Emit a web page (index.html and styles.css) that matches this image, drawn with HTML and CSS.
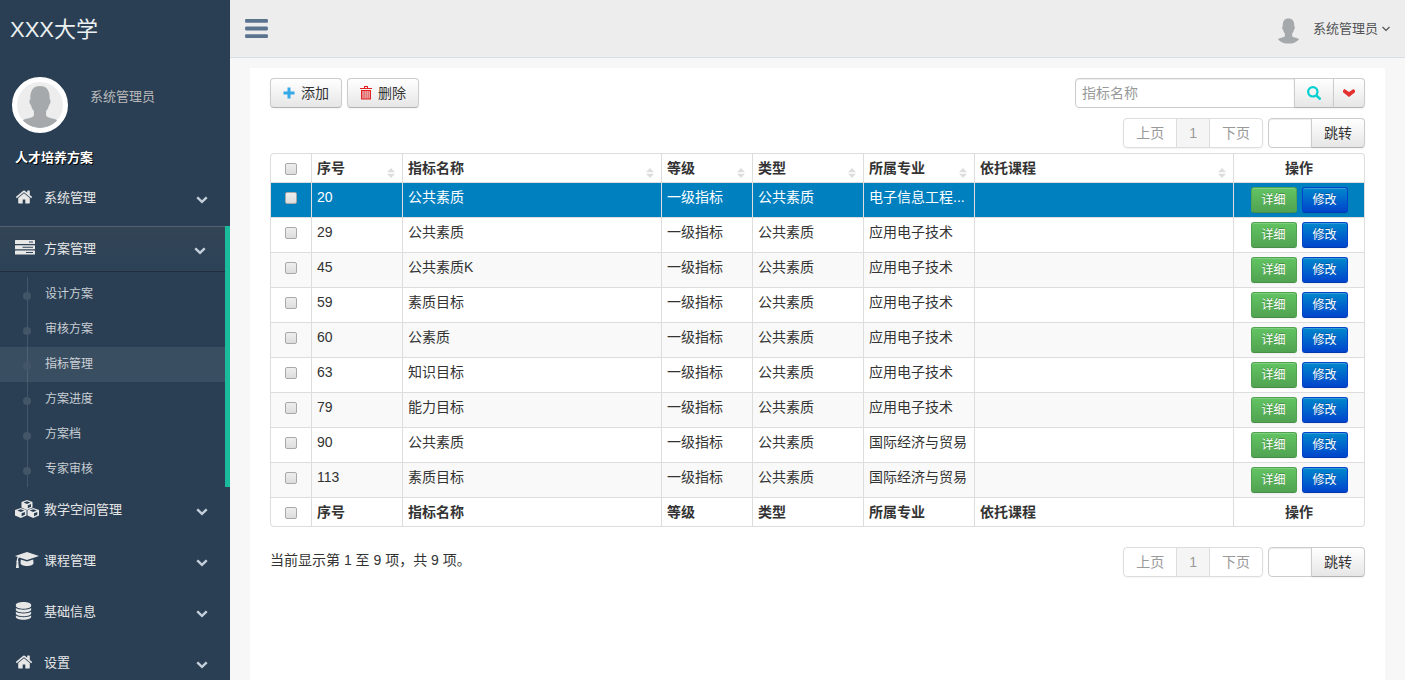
FILE: index.html
```
<!DOCTYPE html>
<html lang="zh-CN">
<head>
    <meta charset="UTF-8">
    <meta name="viewport" content="width=device-width, initial-scale=1.0">
    <title>指标管理</title>
    <link rel="stylesheet" href="styles.css">
</head>
<body>
    <!-- 图标 -->
    <svg class="sprite" aria-hidden="true">
        <symbol id="i-home" viewBox="0 0 1792 1792"><path d="M1472 992v480q0 26-19 45t-45 19h-384v-384h-256v384h-384q-26 0-45-19t-19-45v-480q0-1 .5-3t.5-3l575-474 575 474q1 2 1 6zm223-69l-62 74q-8 9-21 11h-3q-13 0-21-7l-692-577-692 577q-12 8-24 7-13-2-21-11l-62-74q-8-10-7-23.5t11-21.5l719-599q32-26 76-26t76 26l244 204v-195q0-14 9-23t23-9h192q14 0 23 9t9 23v408l219 182q10 8 11 21.5t-7 23.5z"/></symbol>
        <symbol id="i-bars" viewBox="128 256 1536 1280"><path d="M1664 1344v128q0 26-19 45t-45 19h-1408q-26 0-45-19t-19-45v-128q0-26 19-45t45-19h1408q26 0 45 19t19 45zm0-512v128q0 26-19 45t-45 19h-1408q-26 0-45-19t-19-45v-128q0-26 19-45t45-19h1408q26 0 45 19t19 45zm0-512v128q0 26-19 45t-45 19h-1408q-26 0-45-19t-19-45v-128q0-26 19-45t45-19h1408q26 0 45 19t19 45z"/></symbol>
        <symbol id="i-chevron" viewBox="0 0 1792 1792"><path d="M1683 808l-742 741q-19 19-45 19t-45-19l-742-741q-19-19-19-45.500t19-45.500l166-165q19-19 45-19t45 19l531 531 531-531q19-19 45-19t45 19l166 165q19 19 19 45.500t-19 45.500z"/></symbol>
        <symbol id="i-angle" viewBox="0 0 10 8"><path d="M1.500 2L5 5.500 8.500 2" fill="none" stroke="currentColor" stroke-width="1.200"/></symbol>
        <symbol id="i-tasks" viewBox="0 0 20 18"><path fill-rule="evenodd" d="M.5 1h19a.5.500 0 0 1 .5.500v3a.5.500 0 0 1-.5.500H.5a.5.500 0 0 1-.5-.5v-3A.5.500 0 0 1 .5 1zM14 2.500v1h4v-1zM.5 6.200h19a.5.500 0 0 1 .5.500v3a.5.500 0 0 1-.5.500H.5a.5.500 0 0 1-.5-.5v-3a.5.500 0 0 1 .5-.5zM7.500 7.700v1H18v-1zM.5 11.400h19a.5.500 0 0 1 .5.500v3a.5.500 0 0 1-.5.500H.5a.5.500 0 0 1-.5-.5v-3a.5.500 0 0 1 .5-.5zM11 12.900v1h7v-1z"/></symbol>
        <symbol id="i-cubes" viewBox="0 0 24 18">
            <path fill-rule="evenodd" d="M12 0l5.500 2v5.500L12 10 6.500 7.500V2zM12 1.200L8.500 2.500 12 3.900l3.500-1.400zM12.800 5.200v3l3.200-1.500V3.900z"/>
            <path fill-rule="evenodd" d="M5.800 8l5.700 2v5.500L5.800 18 0 15.500V10zM5.800 9.200L2.300 10.500l3.500 1.400 3.500-1.400zM6.600 13.200v3l3.300-1.500v-2.800z"/>
            <path fill-rule="evenodd" d="M18.200 8l5.800 2v5.500L18.200 18l-5.700-2.500V10zM18.200 9.200l-3.500 1.300 3.500 1.400 3.500-1.400zM19 13.200v3l3.300-1.500v-2.800z"/>
        </symbol>
        <symbol id="i-cap" viewBox="0 0 24 18"><path d="M12 1L24 5 12 9 4.200 6.400C3.400 7 3.100 8 3 9.400c.6.400.8 1.200.3 1.800L3.900 17H.9l.7-5.800c-.6-.6-.4-1.400.2-1.800.1-1.400.3-2.600 1-3.500L0 5zM5.800 8.400L12 10.500l6.200-2.100.3 3.800C18.500 13.800 15.500 15 12 15s-6.500-1.200-6.500-2.800z"/></symbol>
        <symbol id="i-database" viewBox="0 0 17 20"><path d="M8.500 0C13.200 0 17 1.300 17 3v1.500c0 1.700-3.800 3-8.500 3S0 6.200 0 4.500V3c0-1.700 3.800-3 8.500-3zM0 6.800c1.700 1.200 4.800 1.900 8.500 1.900s6.800-.7 8.500-1.900v1.800c0 1.700-3.800 3-8.500 3s-8.500-1.300-8.500-3zM0 10.900c1.700 1.200 4.800 1.900 8.500 1.900s6.800-.7 8.500-1.900v1.800c0 1.700-3.800 3-8.500 3s-8.500-1.300-8.500-3zM0 15c1.700 1.200 4.800 1.900 8.500 1.900S15.300 16.200 17 15v1.600c0 1.700-3.800 3-8.500 3s-8.500-1.300-8.500-3z"/></symbol>
        <symbol id="i-user" viewBox="0 0 40 48"><path d="M20 0c7.500 0 11.500 5 11 15 1.500 0 1.500 5-.8 7-.4 3-1.700 5-3.200 6.500V34c3 3.500 11 2.500 13 6-5 5.300-12 8-20 8S5 45.300 0 40c2-3.500 10-2.500 13-6v-5.500c-1.500-1.500-2.800-3.500-3.200-6.500C7.500 20 7.500 15 9 15 8.500 5 12.500 0 20 0z"/></symbol>
        <symbol id="i-plus" viewBox="0 0 12 12"><path d="M4.500.5h3v4h4v3h-4v4h-3v-4h-4v-3h4z"/></symbol>
        <symbol id="i-trash" viewBox="0 0 12 14"><path fill-rule="evenodd" d="M4 0h4v2h4v1H0V2h4zM5 1v1h2V1zM1 4h10v9.500H1zM2.500 5v7.500h1V5zM4.600 5v7.500h1V5zM6.600 5v7.500h1V5zM8.600 5v7.500h1V5z"/></symbol>
        <symbol id="i-search" viewBox="0 0 12 12"><path d="M8.200 8.200l2.700 2.700" stroke="currentColor" stroke-width="2.200" stroke-linecap="round"/><circle cx="5" cy="5" r="4" fill="none" stroke="currentColor" stroke-width="1.900"/></symbol>
        <symbol id="i-down" viewBox="0 0 12 8"><path d="M1.500 0L0 1.500v1.700L6 8l6-4.800V1.500L10.500 0 6 3z"/></symbol>
        <symbol id="i-sort" viewBox="0 0 8 10"><path d="M4 0l4 4.200H0zM0 5.800h8L4 10z"/></symbol>
    </svg>

    <div class="container">
        <!-- 左侧菜单 -->
        <aside class="sidebar">
            <a class="site-title" href="#">XXX大学</a>
            <div class="profile">
                <div class="avatar"><svg><use href="#i-user"/></svg></div>
                <span class="profile-name">系统管理员</span>
            </div>
            <h3 class="menu-heading">人才培养方案</h3>
            <ul class="menu">
                <li><a href="#"><svg class="menu-icon home"><use href="#i-home"/></svg>系统管理<svg class="arrow"><use href="#i-chevron"/></svg></a></li>
                <li class="active">
                    <a href="#"><svg class="menu-icon tasks"><use href="#i-tasks"/></svg>方案管理<svg class="arrow"><use href="#i-chevron"/></svg></a>
                    <ul class="submenu">
                        <li><a href="#">设计方案</a></li>
                        <li><a href="#">审核方案</a></li>
                        <li class="current"><a href="#">指标管理</a></li>
                        <li><a href="#">方案进度</a></li>
                        <li><a href="#">方案档</a></li>
                        <li><a href="#">专家审核</a></li>
                    </ul>
                </li>
                <li><a href="#"><svg class="menu-icon wide"><use href="#i-cubes"/></svg>教学空间管理<svg class="arrow"><use href="#i-chevron"/></svg></a></li>
                <li><a href="#"><svg class="menu-icon wide"><use href="#i-cap"/></svg>课程管理<svg class="arrow"><use href="#i-chevron"/></svg></a></li>
                <li><a href="#"><svg class="menu-icon database"><use href="#i-database"/></svg>基础信息<svg class="arrow"><use href="#i-chevron"/></svg></a></li>
                <li><a href="#"><svg class="menu-icon home"><use href="#i-home"/></svg>设置<svg class="arrow"><use href="#i-chevron"/></svg></a></li>
            </ul>
        </aside>

        <div class="main">
            <!-- 顶部导航 -->
            <header class="topbar">
                <button type="button" class="toggle" aria-label="菜单"><svg><use href="#i-bars"/></svg></button>
                <a class="user" href="#"><svg class="user-photo"><use href="#i-user"/></svg>系统管理员<svg class="user-arrow"><use href="#i-angle"/></svg></a>
            </header>

            <main class="panel">
                <div class="toolbar">
                    <div class="actions">
                        <button type="button" class="btn"><svg class="icon-add"><use href="#i-plus"/></svg>添加</button>
                        <button type="button" class="btn"><svg class="icon-delete"><use href="#i-trash"/></svg>删除</button>
                    </div>
                    <form class="group">
                        <input type="text" class="search" placeholder="指标名称" aria-label="指标名称">
                        <button type="button" class="btn" aria-label="搜索"><svg class="icon-search"><use href="#i-search"/></svg></button>
                        <button type="button" class="btn btn-more" aria-label="更多"><svg class="icon-down"><use href="#i-down"/></svg></button>
                    </form>
                </div>

                <div class="pager">
                    <div class="group pages">
                        <button type="button">上页</button>
                        <button type="button" class="on">1</button>
                        <button type="button">下页</button>
                    </div>
                    <form class="group">
                        <input type="text" class="page-no" aria-label="页码">
                        <button type="button" class="btn">跳转</button>
                    </form>
                </div>

                <table class="table">
                    <colgroup>
                        <col class="col-check"><col class="col-small"><col><col class="col-small">
                        <col class="col-medium"><col class="col-medium"><col><col class="col-action">
                    </colgroup>
                    <thead>
                        <tr>
                            <th class="check"><input type="checkbox" aria-label="全选"></th>
                            <th><div class="sort">序号<svg><use href="#i-sort"/></svg></div></th>
                            <th><div class="sort">指标名称<svg><use href="#i-sort"/></svg></div></th>
                            <th><div class="sort">等级<svg><use href="#i-sort"/></svg></div></th>
                            <th><div class="sort">类型<svg><use href="#i-sort"/></svg></div></th>
                            <th><div class="sort">所属专业<svg><use href="#i-sort"/></svg></div></th>
                            <th><div class="sort">依托课程<svg><use href="#i-sort"/></svg></div></th>
                            <th class="ops">操作</th>
                        </tr>
                    </thead>
                    <tbody>
                        <tr class="selected">
                            <td class="check"><input type="checkbox" aria-label="选择 20"></td>
                            <td>20</td><td>公共素质</td><td>一级指标</td><td>公共素质</td><td>电子信息工程...</td><td></td>
                            <td class="ops"><div><button type="button" class="btn-detail">详细</button><button type="button" class="btn-edit">修改</button></div></td>
                        </tr>
                        <tr>
                            <td class="check"><input type="checkbox" aria-label="选择 29"></td>
                            <td>29</td><td>公共素质</td><td>一级指标</td><td>公共素质</td><td>应用电子技术</td><td></td>
                            <td class="ops"><div><button type="button" class="btn-detail">详细</button><button type="button" class="btn-edit">修改</button></div></td>
                        </tr>
                        <tr>
                            <td class="check"><input type="checkbox" aria-label="选择 45"></td>
                            <td>45</td><td>公共素质K</td><td>一级指标</td><td>公共素质</td><td>应用电子技术</td><td></td>
                            <td class="ops"><div><button type="button" class="btn-detail">详细</button><button type="button" class="btn-edit">修改</button></div></td>
                        </tr>
                        <tr>
                            <td class="check"><input type="checkbox" aria-label="选择 59"></td>
                            <td>59</td><td>素质目标</td><td>一级指标</td><td>公共素质</td><td>应用电子技术</td><td></td>
                            <td class="ops"><div><button type="button" class="btn-detail">详细</button><button type="button" class="btn-edit">修改</button></div></td>
                        </tr>
                        <tr>
                            <td class="check"><input type="checkbox" aria-label="选择 60"></td>
                            <td>60</td><td>公素质</td><td>一级指标</td><td>公共素质</td><td>应用电子技术</td><td></td>
                            <td class="ops"><div><button type="button" class="btn-detail">详细</button><button type="button" class="btn-edit">修改</button></div></td>
                        </tr>
                        <tr>
                            <td class="check"><input type="checkbox" aria-label="选择 63"></td>
                            <td>63</td><td>知识目标</td><td>一级指标</td><td>公共素质</td><td>应用电子技术</td><td></td>
                            <td class="ops"><div><button type="button" class="btn-detail">详细</button><button type="button" class="btn-edit">修改</button></div></td>
                        </tr>
                        <tr>
                            <td class="check"><input type="checkbox" aria-label="选择 79"></td>
                            <td>79</td><td>能力目标</td><td>一级指标</td><td>公共素质</td><td>应用电子技术</td><td></td>
                            <td class="ops"><div><button type="button" class="btn-detail">详细</button><button type="button" class="btn-edit">修改</button></div></td>
                        </tr>
                        <tr>
                            <td class="check"><input type="checkbox" aria-label="选择 90"></td>
                            <td>90</td><td>公共素质</td><td>一级指标</td><td>公共素质</td><td>国际经济与贸易</td><td></td>
                            <td class="ops"><div><button type="button" class="btn-detail">详细</button><button type="button" class="btn-edit">修改</button></div></td>
                        </tr>
                        <tr>
                            <td class="check"><input type="checkbox" aria-label="选择 113"></td>
                            <td>113</td><td>素质目标</td><td>一级指标</td><td>公共素质</td><td>国际经济与贸易</td><td></td>
                            <td class="ops"><div><button type="button" class="btn-detail">详细</button><button type="button" class="btn-edit">修改</button></div></td>
                        </tr>
                    </tbody>
                    <tfoot>
                        <tr>
                            <th class="check"><input type="checkbox" aria-label="全选"></th>
                            <th>序号</th><th>指标名称</th><th>等级</th><th>类型</th><th>所属专业</th><th>依托课程</th>
                            <th class="ops">操作</th>
                        </tr>
                    </tfoot>
                </table>

                <div class="bottom">
                    <p class="info">当前显示第 1 至 9 项，共 9 项。</p>
                    <div class="pager">
                        <div class="group pages">
                            <button type="button">上页</button>
                            <button type="button" class="on">1</button>
                            <button type="button">下页</button>
                        </div>
                        <form class="group">
                            <input type="text" class="page-no" aria-label="页码">
                            <button type="button" class="btn">跳转</button>
                        </form>
                    </div>
                </div>
            </main>
        </div>
    </div>
</body>
</html>
```
FILE: styles.css
```
* {
    box-sizing: border-box;
}
body {
    margin: 0;
    font-family: "Liberation Sans", "Noto Sans CJK SC", sans-serif;
    font-size: 14px;
    line-height: 20px;
    color: #333;
    background: #f7f7f7;
}
a {
    color: inherit;
    text-decoration: none;
}
ul {
    list-style: none;
    margin: 0;
    padding: 0;
}
button, input {
    font-family: inherit;
    font-size: 14px;
    line-height: 20px;
    margin: 0;
}
button {
    cursor: pointer;
}
svg {
    fill: currentColor;
    flex: none;
}
.sprite {
    display: none;
}
.container {
    display: flex;
    height: 100vh;
    overflow: hidden;
}

/* 左侧菜单 */
.sidebar {
    width: 230px;
    flex: none;
    overflow: hidden;
    background: #2a3f54;
    color: #e7e7e7;
    font-size: 13px;
}
.site-title {
    display: block;
    padding: 0 10px;
    font-size: 22px;
    line-height: 60px;
    color: #ecf0f1;
}
.profile {
    display: flex;
    padding: 17px 12px 15px;
    gap: 22px;
}
.avatar {
    display: flex;
    align-items: flex-end;
    justify-content: center;
    width: 56px;
    height: 56px;
    border: 5px solid #fff;
    border-radius: 50%;
    background: #ededed;
    color: #a5a9ab;
    overflow: hidden;
}
.avatar svg {
    width: 36px;
    height: 42px;
}
.profile-name {
    padding-top: 10px;
    color: #bababa;
}
.menu-heading {
    margin: 0;
    padding: 0 15px 7px;
    font-size: 13px;
    line-height: 20px;
    font-weight: bold;
    color: #fff;
    text-shadow: 1px 1px #000;
}
.menu > li > a {
    display: flex;
    padding: 13px 22px 12px 15px;
    margin-bottom: 6px;
}
.menu > .active {
    border-right: 5px solid #1abb9c;
}
.menu > .active > a {
    padding-right: 19px;
    background: linear-gradient(#334556, #2c4257);
    box-shadow: rgba(0, 0, 0, 0.25) 0 1px 0, inset rgba(255, 255, 255, 0.16) 0 1px 0;
}
.menu-icon {
    height: 18px;
}
.menu-icon.home {
    width: 18px;
    margin-right: 11px;
}
.menu-icon.tasks {
    width: 20px;
    margin-right: 9px;
}
.menu-icon.wide {
    width: 24px;
    margin-right: 5px;
}
.menu-icon.database {
    width: 17px;
    margin-right: 12px;
}
.arrow {
    width: 12px;
    height: 12px;
    margin: 5px 0 0 auto;
    color: #c4cfda;
}
.submenu {
    background: linear-gradient(#425668, #425668) 27px 0 / 1px 100% no-repeat;
}
.submenu a {
    display: flex;
    align-items: center;
    height: 35px;
    padding: 0 0 2px 23px;
    font-size: 12px;
    color: rgba(255, 255, 255, 0.75);
}
.submenu a::before {
    content: "";
    width: 8px;
    height: 8px;
    margin: 5px 14px 0 0;
    border-radius: 50%;
    background: #425668;
}
.submenu .current {
    background: rgba(255, 255, 255, 0.08);
}

/* 顶部导航 */
.main {
    flex: 1;
    min-width: 0;
    display: flex;
    flex-direction: column;
    overflow-y: auto;
}
.topbar {
    display: flex;
    justify-content: space-between;
    align-items: center;
    flex: none;
    height: 58px;
    padding: 0 14px 0 15px;
    background: #ededed;
    border-bottom: 1px solid #d9dee4;
}
.toggle {
    display: flex;
    padding: 0;
    border: 0;
    background: none;
    color: #5a738e;
}
.toggle svg {
    width: 23px;
    height: 19px;
}
.user {
    display: flex;
    align-items: center;
    font-size: 13px;
    color: #515356;
}
.user-photo {
    width: 21px;
    height: 26px;
    margin: 4px 14px 0 0;
    color: #a5a9ab;
}
.user-arrow {
    width: 10px;
    height: 8px;
    margin-left: 3px;
}

/* 内容 */
.panel {
    flex: 1 0 auto;
    margin: 10px 20px 0;
    padding: 10px 20px;
    background: #fff;
}
.toolbar {
    display: flex;
    justify-content: space-between;
    margin-bottom: 10px;
}
.actions {
    display: flex;
    gap: 5px;
}
.btn {
    display: flex;
    align-items: center;
    height: 30px;
    padding: 4px 12px;
    border: 1px solid #ccc;
    border-bottom-color: #b3b3b3;
    border-radius: 4px;
    background: linear-gradient(#fff, #e6e6e6);
    box-shadow: 0 1px 2px rgba(0, 0, 0, 0.05);
    color: #333;
}
.icon-add {
    width: 12px;
    height: 12px;
    margin-right: 6px;
    color: #36a9e9;
}
.icon-delete {
    width: 12px;
    height: 14px;
    margin-right: 6px;
    color: #e02222;
}
.icon-search {
    width: 14px;
    height: 14px;
    color: #00d0d0;
}
.icon-down {
    width: 12px;
    height: 8px;
    color: #e53030;
}
.btn-more {
    padding: 4px 9px;
}
.group {
    display: flex;
}
.group > * {
    border-radius: 0;
}
.group > * + * {
    margin-left: -1px;
}
.group > :first-child {
    border-radius: 4px 0 0 4px;
}
.group > :last-child {
    border-radius: 0 4px 4px 0;
}
.group input {
    height: 30px;
    padding: 4px 6px;
    border: 1px solid #ccc;
    box-shadow: inset 0 1px 1px rgba(0, 0, 0, 0.075);
}
.group input::placeholder {
    color: #999;
}
.group .search {
    width: 220px;
}
.group .page-no {
    width: 44px;
}
.pager {
    display: flex;
    justify-content: flex-end;
    gap: 5px;
}
.pages {
    border-radius: 4px;
    box-shadow: 0 1px 2px rgba(0, 0, 0, 0.05);
}
.pages button {
    height: 30px;
    padding: 4px 12px;
    border: 1px solid #ddd;
    background: #fff;
    color: #999;
}
.pages .on {
    background: #f5f5f5;
}

/* 表格 */
.table {
    width: 100%;
    margin: 5px 0 20px;
    table-layout: fixed;
    border: 1px solid #ddd;
    border-left: 0;
    border-radius: 4px;
    border-collapse: separate;
    border-spacing: 0;
}
.col-check {
    width: 41px;
}
.col-small {
    width: 91px;
}
.col-medium {
    width: 111px;
}
.col-action {
    width: 131px;
}
.table th, .table td {
    padding: 4px 5px;
    border-left: 1px solid #ddd;
    text-align: left;
    vertical-align: top;
    white-space: nowrap;
    overflow: hidden;
    text-overflow: ellipsis;
}
.table td, .table tfoot th {
    border-top: 1px solid #ddd;
}
.table thead th:first-child {
    border-top-left-radius: 4px;
}
.table tfoot th:first-child {
    border-bottom-left-radius: 4px;
}
.table tbody tr:nth-child(odd) {
    background: #f9f9f9;
}
.table tbody .selected td {
    background: #0080bf;
    color: #fff;
}
.check input {
    display: block;
    appearance: none;
    width: 12px;
    height: 12px;
    margin: 5px auto 0;
    border: 1px solid #a9a9a9;
    border-radius: 2px;
    background: linear-gradient(#eee, #ddd);
}
.check input:checked {
    background: #0080bf;
}
.sort {
    display: flex;
    justify-content: space-between;
    align-items: flex-end;
    height: 20px;
    padding-right: 2px;
}
.sort svg {
    width: 8px;
    height: 10px;
    color: #ddd;
}
.table .ops {
    text-align: center;
}
.ops div {
    display: flex;
    justify-content: center;
    gap: 5px;
}
.ops button {
    width: 46px;
    height: 26px;
    padding: 2px 0;
    border: 1px solid;
    border-radius: 3px;
    font-size: 12px;
    color: #fff;
    text-shadow: 0 -1px 0 rgba(0, 0, 0, 0.25);
    box-shadow: inset 0 1px 0 rgba(255, 255, 255, 0.2), 0 1px 2px rgba(0, 0, 0, 0.05);
}
.ops .btn-detail {
    border-color: #51a351 #51a351 #478f47;
    background: linear-gradient(#62c462, #51a351);
}
.ops .btn-edit {
    border-color: #0044cc #0044cc #0039ad;
    background: linear-gradient(#0088cc, #0044cc);
}
.bottom {
    display: flex;
    justify-content: space-between;
}
.info {
    margin: 3px 0;
}
```
